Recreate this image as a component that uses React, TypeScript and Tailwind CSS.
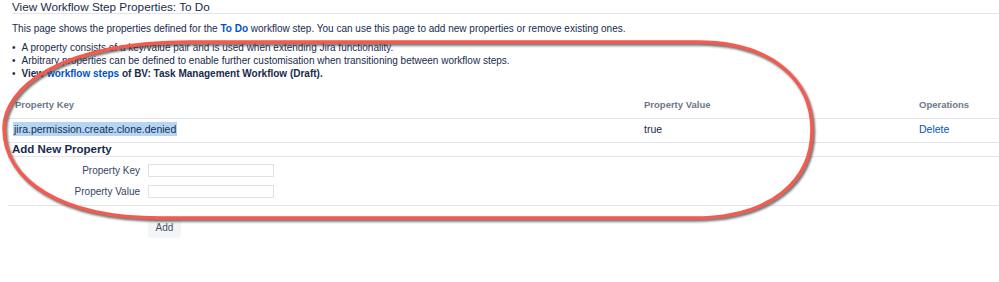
export default function App() {
  return (
    <div className="relative h-[282px] w-[999px] overflow-hidden bg-white font-['Liberation_Sans',Arial,sans-serif] text-[#172b4d]">
      <div className="ml-3 h-[14px] border-b border-[#e4e5e8]">
        <h2 className="text-[11.75px] leading-[13px] font-medium">View Workflow Step Properties: To Do</h2>
      </div>

      <p className="mt-[8px] ml-3 text-[10px] leading-[13px]">
        This page shows the properties defined for the{" "}
        <a className="font-bold text-[#0052cc]">To Do</a> workflow step. You can use this page to add new
        properties or remove existing ones.
      </p>

      <ul className="mt-[6px] ml-3 text-[10px] leading-[13px]">
        <li className="flex gap-[6px]">
          <span>•</span>
          <span>A property consists of a key/value pair and is used when extending Jira functionality.</span>
        </li>
        <li className="flex gap-[6px]">
          <span>•</span>
          <span>Arbitrary properties can be defined to enable further customisation when transitioning between workflow steps.</span>
        </li>
        <li className="flex gap-[6px]">
          <span>•</span>
          <span className="font-bold">
            View <a className="text-[#0052cc]">workflow steps</a> of BV: Task Management Workflow (Draft).
          </span>
        </li>
      </ul>

      <table className="mt-[13px] ml-2 w-[991px] border-collapse text-left">
        <thead>
          <tr className="h-[25px] border-b border-[#e4e5e8] text-[9.5px] text-[#6b778c]">
            <th className="w-[629px] pl-[7px] font-semibold">Property Key</th>
            <th className="w-[275px] pl-[7px] font-semibold">Property Value</th>
            <th className="pl-[7px] font-semibold">Operations</th>
          </tr>
        </thead>
        <tbody>
          <tr className="h-[24px] border-b border-[#e4e5e8] text-[10.5px]">
            <td className="pl-[5px]">
              <span className="bg-[#b5d5f7] px-[1px] py-[1px]">jira.permission.create.clone.denied</span>
            </td>
            <td className="pl-[7px]">true</td>
            <td className="pl-[7px] text-[#0052cc]">Delete</td>
          </tr>
        </tbody>
      </table>

      <div className="ml-2 flex h-[14px] items-center border-b border-[#e4e5e8] pl-[4px]">
        <h3 className="text-[11.5px] leading-[14px] font-semibold">Add New Property</h3>
      </div>

      <div className="ml-2 border-b border-[#e4e5e8] pt-[7px] pb-[7px]">
        <div className="flex items-center">
          <label className="w-[140px] pr-[8px] text-right text-[10px] leading-[13px] text-[#344563]">Property Key</label>
          <input className="h-[13px] w-[126px] border border-[#dfe1e6] bg-white" />
        </div>
        <div className="mt-[8px] flex items-center">
          <label className="w-[140px] pr-[8px] text-right text-[10px] leading-[13px] text-[#344563]">Property Value</label>
          <input className="h-[13px] w-[126px] border border-[#dfe1e6] bg-white" />
        </div>
      </div>

      <div className="mt-[8px] ml-[148px]">
        <button className="h-[21px] w-[33px] rounded-[3px] bg-[#f4f5f7] text-[10px] text-[#42526e]">Add</button>
      </div>

      <svg className="pointer-events-none absolute top-0 left-0" width="999" height="282" viewBox="0 0 999 282">
        <defs>
          <filter id="shadow" x="-5%" y="-5%" width="110%" height="110%">
            <feGaussianBlur stdDeviation="1" />
          </filter>
        </defs>
        <path
          d="M190 42 L697 42 C772 42 812 80 812 130 C812 180 772 218 693 218 L160 218 C60 218 4 180 4 128 C4 88 60 42 190 42 Z"
          fill="none"
          stroke="#3b3b3b"
          strokeOpacity="0.75"
          strokeWidth="3.5"
          transform="translate(1.5 2)"
          filter="url(#shadow)"
        />
        <path
          d="M190 42 L697 42 C772 42 812 80 812 130 C812 180 772 218 693 218 L160 218 C60 218 4 180 4 128 C4 88 60 42 190 42 Z"
          fill="none"
          stroke="#f55a4e"
          strokeWidth="3.5"
        />
      </svg>
    </div>
  );
}
